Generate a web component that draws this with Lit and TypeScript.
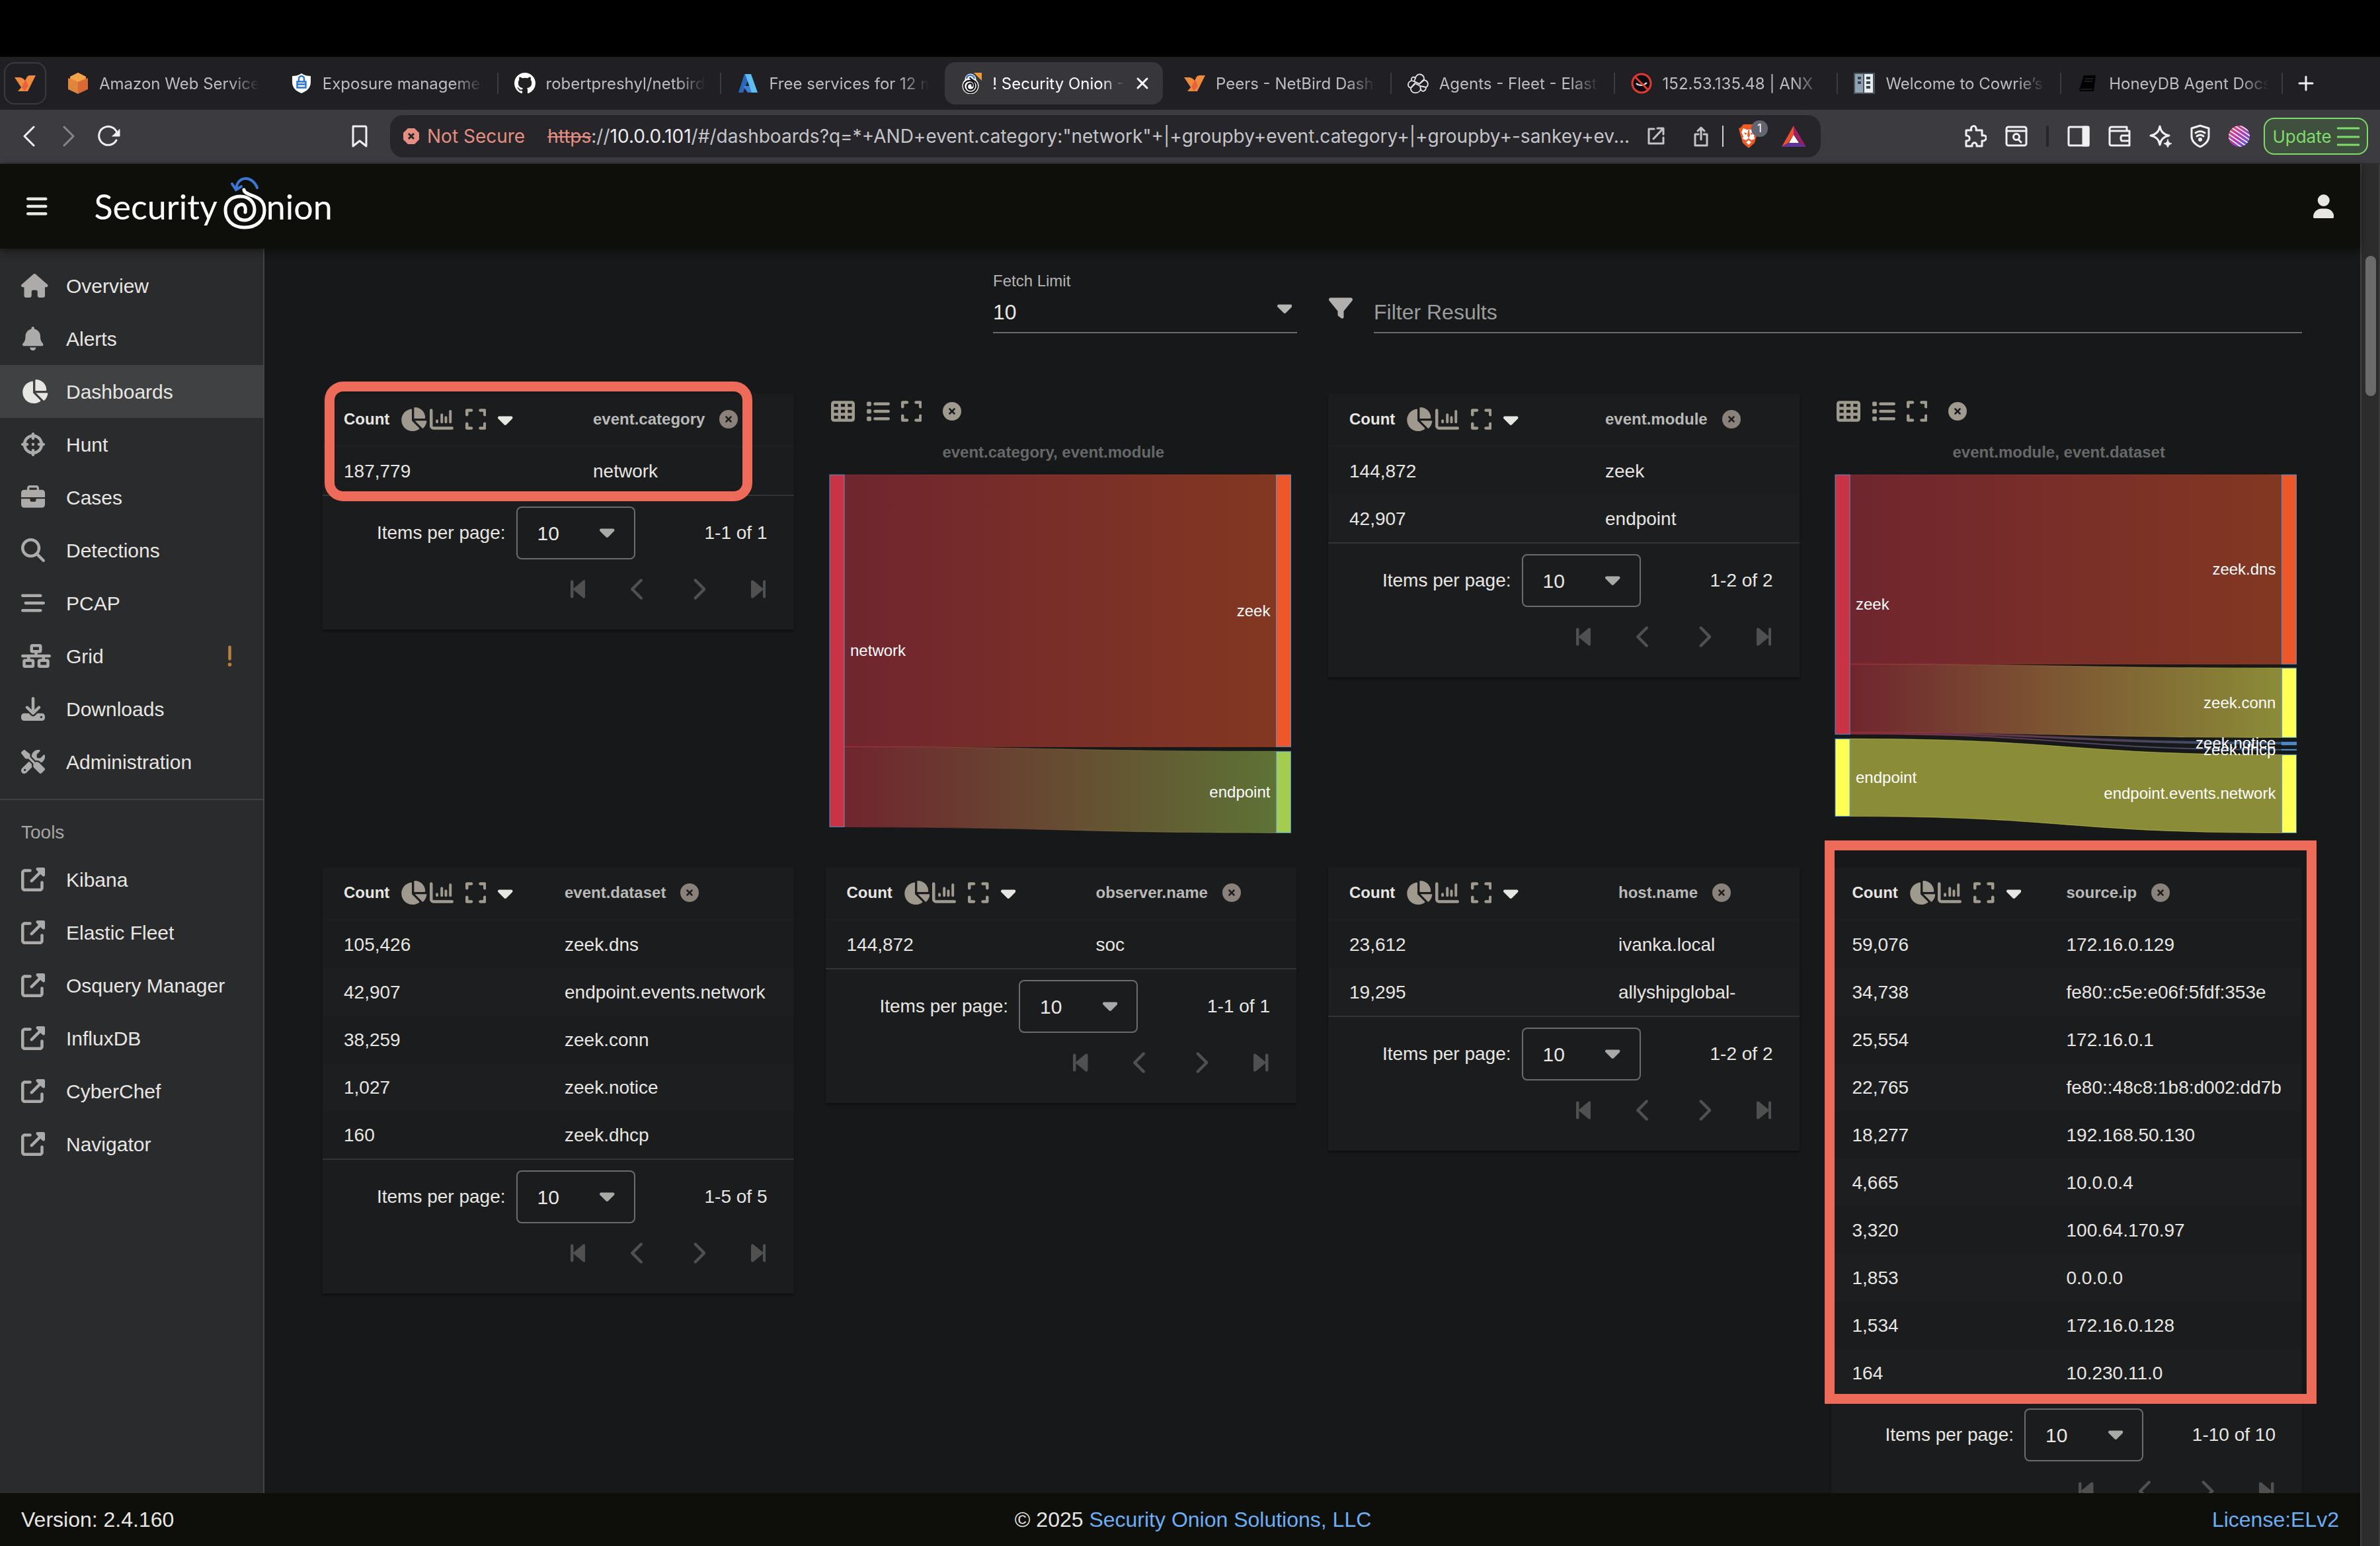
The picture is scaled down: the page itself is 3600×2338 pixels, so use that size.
import { LitElement, html, svg, css, nothing } from "lit";
import { customElement, property } from "lit/decorators.js";
import { classMap } from "lit/directives/class-map.js";

/* ---------- icons ---------- */

const ICONS: Record<string, [number, string]> = {
  house: [576, "M575.8 255.5c0 18-15 32.1-32 32.1h-32l.7 160.2c0 2.7-.2 5.4-.5 8.1V472c0 22.1-17.9 40-40 40H456c-1.1 0-2.2 0-3.3-.1c-1.4 .1-2.8 .1-4.2 .1H416 392c-22.1 0-40-17.9-40-40V448 384c0-17.7-14.3-32-32-32H256c-17.7 0-32 14.3-32 32v64 24c0 22.1-17.9 40-40 40H160 128.1c-1.5 0-3-.1-4.5-.2c-1.2 .1-2.4 .2-3.6 .2H104c-22.1 0-40-17.9-40-40V360c0-.9 0-1.9 .1-2.8V287.6H32c-18 0-32-14-32-32.1c0-9 3-17 10-24L266.4 8c7-7 15-8 22-8s15 2 21 7L564.8 231.5c8 7 12 15 11 24z"],
  bell: [448, "M224 0c-17.7 0-32 14.3-32 32V51.2C119 66 64 130.6 64 208v18.8c0 47-17.3 92.4-48.5 127.6l-7.4 8.3c-8.4 9.4-10.4 22.9-5.3 34.4S19.4 416 32 416H416c12.6 0 24-7.4 29.2-18.9s3.1-25-5.3-34.4l-7.4-8.3C401.3 319.2 384 273.9 384 226.8V208c0-77.4-55-142-128-156.8V32c0-17.7-14.3-32-32-32zm45.3 493.3c12-12 18.7-28.3 18.7-45.3H224 160c0 17 6.7 33.3 18.7 45.3s28.3 18.7 45.3 18.7s33.3-6.7 45.3-18.7z"],
  pie: [576, "M304 240V16.6c0-9 7-16.6 16-16.6C443.7 0 544 100.3 544 224c0 9-7.6 16-16.6 16H304zM32 272C32 150.7 122.1 50.3 239 34.3c9.2-1.3 17 6.1 17 15.4V288L412.5 444.5c6.7 6.7 6.2 17.7-1.5 23.1C371.8 495.6 323.8 512 272 512C139.5 512 32 404.6 32 272zm526.4 16c9.3 0 16.6 7.8 15.4 17c-7.7 55.9-34.6 105.6-73.9 142.3c-6 5.6-15.4 5.2-21.2-.7L320 288H558.4z"],
  crosshairs: [512, "M256 0c17.7 0 32 14.3 32 32V42.4c93.7 13.9 167.7 88 181.6 181.6H480c17.7 0 32 14.3 32 32s-14.3 32-32 32H469.6c-13.9 93.7-88 167.7-181.6 181.6V480c0 17.7-14.3 32-32 32s-32-14.3-32-32V469.6C130.3 455.7 56.3 381.7 42.4 288H32c-17.7 0-32-14.3-32-32s14.3-32 32-32H42.4C56.3 130.3 130.3 56.3 224 42.4V32c0-17.7 14.3-32 32-32zM107.4 288c12.5 58.3 58.4 104.1 116.6 116.6V384c0-17.7 14.3-32 32-32s32 14.3 32 32v20.6c58.3-12.5 104.1-58.4 116.6-116.6H384c-17.7 0-32-14.3-32-32s14.3-32 32-32h20.6C392.1 165.7 346.3 119.9 288 107.4V128c0 17.7-14.3 32-32 32s-32-14.3-32-32V107.4C165.7 119.9 119.9 165.7 107.4 224H128c17.7 0 32 14.3 32 32s-14.3 32-32 32H107.4zM256 224a32 32 0 1 1 0 64 32 32 0 1 1 0-64z"],
  briefcase: [512, "M184 48H328c4.4 0 8 3.6 8 8V96H176V56c0-4.4 3.6-8 8-8zm-56 8V96H64C28.7 96 0 124.7 0 160v96H192 320 512V160c0-35.3-28.7-64-64-64H384V56c0-30.9-25.1-56-56-56H184c-30.9 0-56 25.1-56 56zM512 288H320v32c0 17.7-14.3 32-32 32H224c-17.7 0-32-14.3-32-32V288H0V416c0 35.3 28.7 64 64 64H448c35.3 0 64-28.7 64-64V288z"],
  search: [512, "M416 208c0 45.9-14.9 88.3-40 122.7L502.6 457.4c12.5 12.5 12.5 32.8 0 45.3s-32.8 12.5-45.3 0L330.7 376c-34.4 25.2-76.8 40-122.7 40C93.1 416 0 322.9 0 208S93.1 0 208 0S416 93.1 416 208zM208 352a144 144 0 1 0 0-288 144 144 0 1 0 0 288z"],
  staggered: [512, "M0 96C0 78.3 14.3 64 32 64H416c17.7 0 32 14.3 32 32s-14.3 32-32 32H32C14.3 128 0 113.7 0 96zM64 256c0-17.7 14.3-32 32-32H480c17.7 0 32 14.3 32 32s-14.3 32-32 32H96c-17.7 0-32-14.3-32-32zM448 416c0 17.7-14.3 32-32 32H32c-17.7 0-32-14.3-32-32s14.3-32 32-32H416c17.7 0 32 14.3 32 32z"],
  network: [640, "M256 64H384v64H256V64zM240 0c-26.5 0-48 21.5-48 48v96c0 26.5 21.5 48 48 48h48v32H32c-17.7 0-32 14.3-32 32s14.3 32 32 32h96v32H80c-26.5 0-48 21.5-48 48v96c0 26.5 21.5 48 48 48H240c26.5 0 48-21.5 48-48V368c0-26.5-21.5-48-48-48H192V288H448v32H400c-26.5 0-48 21.5-48 48v96c0 26.5 21.5 48 48 48H560c26.5 0 48-21.5 48-48V368c0-26.5-21.5-48-48-48H512V288h96c17.7 0 32-14.3 32-32s-14.3-32-32-32H352V192h48c26.5 0 48-21.5 48-48V48c0-26.5-21.5-48-48-48H240zM96 448V384H224v64H96zm320-64H544v64H416V384z"],
  download: [512, "M288 32c0-17.7-14.3-32-32-32s-32 14.3-32 32V274.7l-73.4-73.4c-12.5-12.5-32.8-12.5-45.3 0s-12.5 32.8 0 45.3l128 128c12.5 12.5 32.8 12.5 45.3 0l128-128c12.5-12.5 12.5-32.8 0-45.3s-32.8-12.5-45.3 0L288 274.7V32zM64 352c-35.3 0-64 28.7-64 64v32c0 35.3 28.7 64 64 64H448c35.3 0 64-28.7 64-64V416c0-35.3-28.7-64-64-64H346.5l-45.3 45.3c-25 25-65.5 25-90.5 0L165.5 352H64zm368 56a24 24 0 1 1 0 48 24 24 0 1 1 0-48z"],
  tools: [512, "M78.6 5C69.1-2.4 55.6-1.5 47 7L7 47c-8.5 8.5-9.4 22-2.1 31.6l80 104c4.5 5.9 11.6 9.4 19 9.4h54.1l109 109c-14.7 29-10 65.4 14.3 89.6l112 112c12.5 12.5 32.8 12.5 45.3 0l64-64c12.5-12.5 12.5-32.8 0-45.3l-112-112c-24.2-24.2-60.6-29-89.6-14.3l-109-109V104c0-7.5-3.5-14.5-9.4-19L78.6 5zM19.9 396.1C7.2 408.8 0 426.1 0 444.1C0 481.6 30.4 512 67.9 512c18 0 35.3-7.2 48-19.9L233.7 374.3c-7.8-20.9-9-43.6-3.6-65.1l-61.7-61.7L19.9 396.1zM512 144c0-10.5-1.1-20.7-3.2-30.5c-2.4-11.2-16.1-14.1-24.2-6l-63.9 63.9c-3 3-7.1 4.7-11.3 4.7H352c-8.8 0-16-7.2-16-16V102.6c0-4.2 1.7-8.3 4.7-11.3l63.9-63.9c8.1-8.1 5.2-21.8-6-24.2C388.7 1.1 378.5 0 368 0C288.5 0 224 64.5 224 144l0 .8 85.3 85.3c36-9.1 75.8 .5 104 28.7L429 274.5c49-23 83-72.8 83-130.5zM56 432a24 24 0 1 1 48 0 24 24 0 1 1 -48 0z"],
  external: [512, "M352 0c-12.9 0-24.6 7.8-29.6 19.8s-2.2 25.7 6.9 34.9L370.7 96 201.4 265.4c-12.5 12.5-12.5 32.8 0 45.3s32.8 12.5 45.3 0L416 141.3l41.4 41.4c9.2 9.2 22.9 11.9 34.9 6.9s19.8-16.6 19.8-29.6V32c0-17.7-14.3-32-32-32H352zM80 32C35.8 32 0 67.8 0 112V432c0 44.2 35.8 80 80 80H400c44.2 0 80-35.8 80-80V320c0-17.7-14.3-32-32-32s-32 14.3-32 32V432c0 8.8-7.2 16-16 16H80c-8.8 0-16-7.2-16-16V112c0-8.8 7.2-16 16-16H192c17.7 0 32-14.3 32-32s-14.3-32-32-32H80z"],
  exclamation: [128, "M96 64c0-17.7-14.3-32-32-32S32 46.3 32 64V320c0 17.7 14.3 32 32 32s32-14.3 32-32V64zM64 480a40 40 0 1 0 0-80 40 40 0 1 0 0 80z"],
  expand: [448, "M32 32C14.3 32 0 46.3 0 64v96c0 17.7 14.3 32 32 32s32-14.3 32-32V96h64c17.7 0 32-14.3 32-32s-14.3-32-32-32H32zM64 352c0-17.7-14.3-32-32-32s-32 14.3-32 32v96c0 17.7 14.3 32 32 32h96c17.7 0 32-14.3 32-32s-14.3-32-32-32H64V352zM320 32c-17.7 0-32 14.3-32 32s14.3 32 32 32h64v64c0 17.7 14.3 32 32 32s32-14.3 32-32V64c0-17.7-14.3-32-32-32H320zM448 352c0-17.7-14.3-32-32-32s-32 14.3-32 32v64H320c-17.7 0-32 14.3-32 32s14.3 32 32 32h96c17.7 0 32-14.3 32-32V352z"],
  cells: [512, "M64 32C28.7 32 0 60.7 0 96V416c0 35.3 28.7 64 64 64H448c35.3 0 64-28.7 64-64V96c0-35.3-28.7-64-64-64H64zm88 64v64H64V96h88zm148 0v64H212V96h88zm148 0v64H360V96h88zM152 224v64H64V224h88zm148 0v64H212V224h88zm148 0v64H360V224h88zM152 352v64H64V352h88zm148 0v64H212V352h88zm148 0v64H360V352h88z"],
  list: [512, "M40 48C26.7 48 16 58.7 16 72v48c0 13.3 10.7 24 24 24H88c13.3 0 24-10.7 24-24V72c0-13.3-10.7-24-24-24H40zM192 64c-17.7 0-32 14.3-32 32s14.3 32 32 32H480c17.7 0 32-14.3 32-32s-14.3-32-32-32H192zm0 160c-17.7 0-32 14.3-32 32s14.3 32 32 32H480c17.7 0 32-14.3 32-32s-14.3-32-32-32H192zm0 160c-17.7 0-32 14.3-32 32s14.3 32 32 32H480c17.7 0 32-14.3 32-32s-14.3-32-32-32H192zM16 232v48c0 13.3 10.7 24 24 24H88c13.3 0 24-10.7 24-24V232c0-13.3-10.7-24-24-24H40c-13.3 0-24 10.7-24 24zM40 368c-13.3 0-24 10.7-24 24v48c0 13.3 10.7 24 24 24H88c13.3 0 24-10.7 24-24V392c0-13.3-10.7-24-24-24H40z"],
  close: [512, "M256 512A256 256 0 1 0 256 0a256 256 0 1 0 0 512zM175 175c9.4-9.4 24.6-9.4 33.9 0l47 47 47-47c9.4-9.4 24.6-9.4 33.9 0s9.4 24.6 0 33.9l-47 47 47 47c9.4 9.4 9.4 24.6 0 33.9s-24.6 9.4-33.9 0l-47-47-47 47c-9.4 9.4-24.6 9.4-33.9 0s-9.4-24.6 0-33.9l47-47-47-47c-9.4-9.4-9.4-24.6 0-33.9z"],
  caret: [320, "M137.4 374.6c12.5 12.5 32.8 12.5 45.3 0l128-128c9.2-9.2 11.9-22.9 6.9-34.9s-16.6-19.8-29.6-19.8L32 192c-12.9 0-24.6 7.8-29.6 19.8s-2.2 25.7 6.9 34.9l128 128z"],
  first: [320, "M267.5 440.6c9.5 7.9 22.8 9.7 34.1 4.4s18.4-16.6 18.4-29V96c0-12.4-7.2-23.7-18.4-29s-24.5-3.6-34.1 4.4l-192 160L64 241V96c0-17.7-14.3-32-32-32S0 78.3 0 96V416c0 17.7 14.3 32 32 32s32-14.3 32-32V271l11.5 9.6 192 160z"],
  prev: [320, "M9.4 233.4c-12.5 12.5-12.5 32.8 0 45.3l192 192c12.5 12.5 32.8 12.5 45.3 0s12.5-32.8 0-45.3L77.3 256 246.6 86.6c12.5-12.5 12.5-32.8 0-45.3s-32.8-12.5-45.3 0l-192 192z"],
  next: [320, "M310.6 233.4c12.5 12.5 12.5 32.8 0 45.3l-192 192c-12.5 12.5-32.8 12.5-45.3 0s-12.5-32.8 0-45.3L242.7 256 73.4 86.6c-12.5-12.5-12.5-32.8 0-45.3s32.8-12.5 45.3 0l192 192z"],
  last: [320, "M52.5 440.6c-9.5 7.9-22.8 9.7-34.1 4.4S0 428.4 0 416V96C0 83.6 7.2 72.3 18.4 67s24.5-3.6 34.1 4.4l192 160L256 241V96c0-17.7 14.3-32 32-32s32 14.3 32 32V416c0 17.7-14.3 32-32 32s-32-14.3-32-32V271l-11.5 9.6-192 160z"],
  filter: [512, "M3.9 54.9C10.5 40.9 24.5 32 40 32H472c15.5 0 29.5 8.9 36.1 22.9s4.6 30.5-5.2 42.5L320 320.9V448c0 12.1-6.8 23.2-17.7 28.6s-23.8 4.3-33.5-3l-64-48c-8.1-6-12.8-15.5-12.8-25.6V320.9L9 97.3C-.7 85.4-2.8 68.8 3.9 54.9z"],
  bars: [448, "M0 96C0 78.3 14.3 64 32 64H416c17.7 0 32 14.3 32 32s-14.3 32-32 32H32C14.3 128 0 113.7 0 96zM0 256c0-17.7 14.3-32 32-32H416c17.7 0 32 14.3 32 32s-14.3 32-32 32H32c-17.7 0-32-14.3-32-32zM448 416c0 17.7-14.3 32-32 32H32c-17.7 0-32-14.3-32-32s14.3-32 32-32H416c17.7 0 32 14.3 32 32z"],
  user: [448, "M224 256A128 128 0 1 0 224 0a128 128 0 1 0 0 256zm-45.7 48C79.8 304 0 383.8 0 482.3C0 498.7 13.3 512 29.7 512H418.3c16.4 0 29.7-13.3 29.7-29.7C448 383.8 368.2 304 269.7 304H178.3z"],
};

const icon = (name: string, size = 36) => {
  const [w, d] = ICONS[name];
  return html`<svg class="ico" aria-hidden="true" viewBox="0 0 ${w} 512" width=${(w * size) / 512} height=${size}><path fill="currentColor" d=${d} /></svg>`;
};

const chartIcon = html`<svg class="ico" aria-hidden="true" viewBox="0 0 512 512" width="36" height="36" fill="none" stroke="currentColor" stroke-linecap="round">
  <path stroke-width="64" d="M32 64V400a48 48 0 0 0 48 48H480" />
  <path stroke-width="56" d="M157 288V316M259 160V316M348 216V316M444 84V316" />
</svg>`;

const netbird = html`<svg viewBox="0 0 32 32" width="32" height="32" aria-hidden="true">
  <path fill="#ee8b3e" d="M0 7h7c4 0 7 2 9 5l5 8-7 8z" />
  <path fill="#ee8b3e" d="M32 4h-8c-3 0-5 1-6 4l-6 12-7 8h15z" />
  <path fill="#e9613c" d="M17 10 11 21l4 7 6-8-4-9z" />
</svg>`;

const FAVICONS: Record<string, unknown> = {
  aws: html`<svg viewBox="0 0 32 32" width="32" height="32" aria-hidden="true">
    <path fill="#ef9a40" d="M16 0 28 6v10l-12 7L4 16V6z" />
    <path fill="#e0853c" d="M1 8 16 14v18L1 25z" />
    <path fill="#d96a35" d="M31 8 16 14v18l15-7z" />
    <path fill="#f2a648" d="M16 0 28 6 16 14 4 6z" />
  </svg>`,
  shield: html`<svg viewBox="0 0 32 32" width="32" height="32" aria-hidden="true">
    <path fill="#fff" d="M16 1c5 3 9 4 14 4v9c0 9-6 14-14 17C8 28 2 23 2 14V5c5 0 9-1 14-4z" />
    <path fill="none" stroke="#2a74cf" stroke-width="2.4" d="M9.500 13.500h13v9h-13zM12 13V9a4 4 0 0 1 8 0v4M9 17.500h14" />
  </svg>`,
  github: html`<svg viewBox="0 0 16 16" width="32" height="32" aria-hidden="true"><path fill="#fff" d="M8 0C3.580 0 0 3.580 0 8c0 3.540 2.290 6.530 5.470 7.590.4.070.55-.17.55-.38 0-.19-.01-.82-.01-1.490-2.010.37-2.530-.49-2.690-.94-.09-.23-.48-.94-.82-1.130-.28-.15-.68-.52-.01-.53.63-.01 1.080.58 1.230.82.72 1.210 1.870.87 2.330.66.07-.52.28-.87.51-1.070-1.780-.2-3.640-.89-3.640-3.950 0-.87.31-1.590.82-2.150-.08-.2-.36-1.020.08-2.120 0 0 .67-.21 2.200.82.64-.18 1.320-.27 2-.27s1.360.09 2 .27c1.530-1.040 2.200-.82 2.200-.82.44 1.100.16 1.920.08 2.120.51.56.82 1.270.82 2.150 0 3.070-1.870 3.750-3.650 3.950.29.25.54.73.54 1.480 0 1.070-.01 1.930-.01 2.200 0 .21.15.46.55.38A8 8 0 0 0 16 8c0-4.420-3.580-8-8-8z" /></svg>`,
  azure: html`<svg viewBox="0 0 32 32" width="32" height="32" aria-hidden="true">
    <path fill="#2a67b8" d="M11 2h9L9 30H2z" />
    <path fill="#3f7fd6" d="M9 20h14l5 10H16z" />
    <path fill="#5fbdf0" d="M12 2h9l10 28h-9z" />
  </svg>`,
  onion: html`<svg viewBox="0 0 32 32" width="32" height="32" aria-hidden="true">
    <path fill="#f09a35" d="M20 0h12v12z" />
    <circle cx="15" cy="20" r="12.500" fill="#fff" />
    <circle cx="15" cy="10" r="8.500" fill="#fff" />
    <path fill="none" stroke="#3b7bd6" stroke-width="2.600" d="M9 9c1-7 10-7 12 0" />
    <path fill="none" stroke="#17171a" stroke-width="2.400" d="M14 7c1 5 11 4 11 13a10 10 0 0 1-20 0c0-5 4-8 9-8s7 4 7 8-3 6-6 6-5-2-5-5 2-5 5-5 3 3 2 5" />
  </svg>`,
  netbird,
  elastic: html`<svg viewBox="0 0 32 32" width="32" height="32" fill="none" stroke="#e6e6e8" stroke-width="1.800" aria-hidden="true">
    <path fill="#202024" d="M12 8a6.500 6.500 0 1 1 13 2l-7 7-8-4z" />
    <path d="M12 8c-3-3-7-1-6 4M25 11c6 1 8 8 3 11M6 12c-6 2-7 9-1 11M5 23c-1 9 12 10 15 2l-1-5-8-4z" />
    <path d="M10 13l8 4 7-6M11 17l-6 6M19 20l9 2M20 25c2 5 8 3 8-3M10 13l-4-1" />
  </svg>`,
  banned: html`<svg viewBox="0 0 32 32" width="32" height="32" aria-hidden="true">
    <circle cx="16" cy="16" r="14" fill="#0b0b0d" stroke="#e23a2e" stroke-width="3" />
    <path fill="none" stroke="#ddd" stroke-width="2.400" d="M8 16c4 4 11 4 16-1" />
    <path stroke="#e23a2e" stroke-width="3" d="M6 6l20 20" />
  </svg>`,
  cowrie: html`<svg viewBox="0 0 32 32" width="32" height="32" aria-hidden="true">
    <path fill="#4b565f" d="M0 0h32v32H0z" /><path fill="#8fa3b5" d="M2 2h12v28H2z" /><path fill="#e8edf0" d="M16 2h13v28H16z" />
    <path fill="#39444d" d="M6 6h5v4H6zM6 13h5v4H6zM19 6h6v4h-6zM19 13h6v4h-6zM19 20h6v4h-6z" />
  </svg>`,
  book: html`<svg viewBox="0 0 32 32" width="32" height="32" aria-hidden="true">
    <path fill="#000" d="M10 4h18l-3 24H5c-2 0-2-3-1-5z" /><path fill="none" stroke="#26262c" stroke-width="1.600" d="M12 9h12M11 13h12M5 25h18" />
  </svg>`,
};

const line = (body: unknown, w: number, h: number, sw = 3) => html`<svg viewBox="0 0 ${w} ${h}" width=${w} height=${h} fill="none" stroke="currentColor" stroke-width=${sw} stroke-linecap="round" stroke-linejoin="round" aria-hidden="true">${body}</svg>`;

/* ---------- data ---------- */

interface Group { field: string; split: number; rows: [string, string][]; ring?: string; }
interface Node_ { side: "l" | "r"; y0: number; y1: number; color: string; label: string; }
interface Link_ { a: [number, number]; b: [number, number]; from: string; to: string; }
interface Flow { title: string; nodes: Node_[]; links: Link_[]; }

const RED = "#c93343", ORANGE = "#ee5729", GREEN = "#a4cc50", YELLOW = "#ffff55", BLUE = "#4c88c4";

const G: Record<string, Group> = {
  category: { field: "event.category", split: 393, rows: [["187,779", "network"]], ring: "round" },
  module: { field: "event.module", split: 403, rows: [["144,872", "zeek"], ["42,907", "endpoint"]] },
  dataset: { field: "event.dataset", split: 350, rows: [["105,426", "zeek.dns"], ["42,907", "endpoint.events.network"], ["38,259", "zeek.conn"], ["1,027", "zeek.notice"], ["160", "zeek.dhcp"]] },
  observer: { field: "observer.name", split: 393, rows: [["144,872", "soc"]] },
  host: { field: "host.name", split: 423, rows: [["23,612", "ivanka.local"], ["19,295", "allyshipglobal-"]] },
  source: {
    field: "source.ip", split: 340, ring: "square",
    rows: [["59,076", "172.16.0.129"], ["34,738", "fe80::c5e:e06f:5fdf:353e"], ["25,554", "172.16.0.1"], ["22,765", "fe80::48c8:1b8:d002:dd7b"], ["18,277", "192.168.50.130"], ["4,665", "10.0.0.4"], ["3,320", "100.64.170.97"], ["1,853", "0.0.0.0"], ["1,534", "172.16.0.128"], ["164", "10.230.11.0"]],
  },
};

const F1: Flow = {
  title: "event.category, event.module",
  nodes: [
    { side: "l", y0: 70, y1: 602, color: RED, label: "network" },
    { side: "r", y0: 70, y1: 481, color: ORANGE, label: "zeek" },
    { side: "r", y0: 488, y1: 611, color: GREEN, label: "endpoint" },
  ],
  links: [
    { a: [70, 481], b: [70, 481], from: RED, to: ORANGE },
    { a: [481, 602], b: [488, 611], from: RED, to: GREEN },
  ],
};

const F2: Flow = {
  title: "event.module, event.dataset",
  nodes: [
    { side: "l", y0: 70, y1: 462, color: RED, label: "zeek" },
    { side: "l", y0: 469, y1: 586, color: YELLOW, label: "endpoint" },
    { side: "r", y0: 70, y1: 356, color: ORANGE, label: "zeek.dns" },
    { side: "r", y0: 362, y1: 467, color: YELLOW, label: "zeek.conn" },
    { side: "r", y0: 474, y1: 478, color: BLUE, label: "zeek.notice" },
    { side: "r", y0: 485, y1: 486, color: BLUE, label: "zeek.dhcp" },
    { side: "r", y0: 493, y1: 611, color: YELLOW, label: "endpoint.events.network" },
  ],
  links: [
    { a: [70, 356], b: [70, 356], from: RED, to: ORANGE },
    { a: [356, 459], b: [362, 467], from: RED, to: YELLOW },
    { a: [459, 461], b: [474, 477], from: RED, to: BLUE },
    { a: [461, 462], b: [485, 486], from: RED, to: BLUE },
    { a: [469, 586], b: [493, 611], from: YELLOW, to: YELLOW },
  ],
};

const NAV: [string, string][] = [["house", "Overview"], ["bell", "Alerts"], ["pie", "Dashboards"], ["crosshairs", "Hunt"], ["briefcase", "Cases"], ["search", "Detections"], ["staggered", "PCAP"], ["network", "Grid"], ["download", "Downloads"], ["tools", "Administration"]];
const TOOLS = ["Kibana", "Elastic Fleet", "Osquery Manager", "InfluxDB", "CyberChef", "Navigator"];

const TABS: { ico: string; title: string; sep?: boolean; active?: boolean }[] = [
  { ico: "aws", title: "Amazon Web Services" },
  { ico: "shield", title: "Exposure management" },
  { ico: "github", title: "robertpreshyl/netbird", sep: true },
  { ico: "azure", title: "Free services for 12 months", sep: true },
  { ico: "onion", title: "! Security Onion - Dash", active: true },
  { ico: "netbird", title: "Peers - NetBird Dashboard" },
  { ico: "elastic", title: "Agents - Fleet - Elastic", sep: true },
  { ico: "banned", title: "152.53.135.48 | ANX", sep: true },
  { ico: "cowrie", title: "Welcome to Cowrie’s docs", sep: true },
  { ico: "book", title: "HoneyDB Agent Docs", sep: true },
];

const base = css`
  * { box-sizing: border-box; }
  svg { display: block; flex: none; }
  button { appearance: none; background: none; border: 0; padding: 0; margin: 0; color: inherit; font: inherit; display: flex; align-items: center; justify-content: center; flex: none; }
  select, input { appearance: none; background: none; border: 0; border-radius: 0; margin: 0; padding: 0; color: inherit; font: inherit; outline: none; }
  a { color: inherit; text-decoration: none; }
`;

/* ---------- grouped count table ---------- */

@customElement("group-table")
export class GroupTable extends LitElement {
  @property({ attribute: false }) group!: Group;

  static styles = [base, css`
    :host { display: block; }
    .card { position: relative; background: #1b1c1e; box-shadow: 0 3px 3px rgba(0, 0, 0, 0.35); }
    table { width: 100%; table-layout: fixed; border-collapse: separate; border-spacing: 0; }
    th, td { text-align: left; padding: 0 0 0 32px; white-space: nowrap; overflow: visible; }
    th + th, td + td { padding-left: 16px; }
    th { height: 80px; padding-bottom: 2px; font-size: 24px; font-weight: 700; border-bottom: 2px solid #1f2022; }
    td { height: 72px; padding-top: 1px; font-size: 28px; }
    tr:nth-child(even) td { background: #1d1e20; }
    .head { display: flex; align-items: center; gap: 18px; }
    .pair { display: flex; gap: 4px; color: #a09a8e; }
    .soft { color: #a09a8e; }
    .count { display: flex; align-items: center; gap: 16px; }
    .name { color: #b9b9b7; }
    .col2 { display: flex; align-items: center; gap: 22px; }
    .rm { color: #8a827a; }
    .foot { border-top: 2px solid #333436; padding: 16px 0; font-size: 28px; }
    .size { display: flex; align-items: center; justify-content: flex-end; gap: 16px; padding-right: 40px; }
    .pick { position: relative; display: flex; }
    .pick select { width: 180px; height: 80px; border: 2px solid #6a6b6c; border-radius: 8px; padding: 0 30px; font-size: 30px; }
    .pick svg { position: absolute; right: 31px; top: 20px; color: #a9a9a7; pointer-events: none; }
    .info { min-width: 184px; text-align: right; }
    .pages { display: flex; justify-content: flex-end; padding-right: 8px; height: 90px; color: #4f504f; }
    .pages button { width: 91px; height: 90px; }
    .ring { position: absolute; border: 15px solid #ed6b58; pointer-events: none; z-index: 2; }
    .round { inset: -19px 63px 194px 3px; border-radius: 28px; }
    .square { inset: -41px -22px 193px -10px; }
  `];

  render() {
    const { field, split, rows, ring } = this.group;
    const n = rows.length;
    return html`<section class="card">
      <table>
        <colgroup><col style="width:${split}px" /><col /></colgroup>
        <thead><tr>
          <th scope="col"><div class="head">
            <span class="count">Count <span class="pair"><button aria-label="Pie chart">${icon("pie")}</button><button aria-label="Bar chart">${chartIcon}</button></span></span>
            <button class="soft" aria-label="Maximize">${icon("expand")}</button>
            <button aria-label="Sort">${icon("caret")}</button>
          </div></th>
          <th scope="col"><div class="col2"><span class="name">${field}</span><button class="rm" aria-label="Remove ${field}">${icon("close", 28)}</button></div></th>
        </tr></thead>
        <tbody>${rows.map(([c, v]) => html`<tr><td>${c}</td><td>${v}</td></tr>`)}</tbody>
      </table>
      <div class="foot">
        <div class="size">
          <label for="size">Items per page:</label>
          <span class="pick"><select id="size"><option>10</option><option>25</option><option>50</option></select>${icon("caret")}</span>
          <span class="info">1-${n} of ${n}</span>
        </div>
        <div class="pages">
          <button aria-label="First page">${icon("first")}</button>
          <button aria-label="Previous page">${icon("prev")}</button>
          <button aria-label="Next page">${icon("next")}</button>
          <button aria-label="Last page">${icon("last")}</button>
        </div>
      </div>
      ${ring ? html`<div class="ring ${ring}"></div>` : nothing}
    </section>`;
  }
}

/* ---------- sankey ---------- */

@customElement("sankey-chart")
export class SankeyChart extends LitElement {
  @property({ attribute: false }) flow!: Flow;

  static styles = [base, css`
    :host { display: block; }
    .bar { display: flex; align-items: center; height: 52px; padding-left: 8px; color: #a09a8e; gap: 17px; }
    .bar .rm { margin-left: 15px; }
    .plot { width: 100%; height: auto; }
    .title { font-size: 24px; font-weight: 700; fill: #676868; }
    .label { font-size: 24px; fill: #fff; }
  `];

  private ribbon(l: Link_) {
    const x0 = 28, x1 = 681, m = (x0 + x1) / 2;
    return `M${x0} ${l.a[0]}C${m} ${l.a[0]} ${m} ${l.b[0]} ${x1} ${l.b[0]}V${l.b[1]}C${m} ${l.b[1]} ${m} ${l.a[1]} ${x0} ${l.a[1]}Z`;
  }

  render() {
    const { title, nodes, links } = this.flow;
    return html`
      <div class="bar">
        <button aria-label="Table">${icon("cells")}</button>
        <button aria-label="Legend">${icon("list")}</button>
        <button aria-label="Maximize">${icon("expand")}</button>
        <button class="rm" aria-label="Remove">${icon("close", 28)}</button>
      </div>
      <svg class="plot" viewBox="0 0 712 616" role="img" aria-label=${title}>
        <defs>${links.map((l, i) => svg`<linearGradient id="g${i}" gradientUnits="userSpaceOnUse" x1="28" x2="681" y1="0" y2="0"><stop stop-color=${l.from} /><stop offset="1" stop-color=${l.to} /></linearGradient>`)}</defs>
        <text class="title" x="344" y="44" text-anchor="middle">${title}</text>
        ${links.map((l, i) => svg`<path d=${this.ribbon(l)} fill="url(#g${i})" stroke="url(#g${i})" fill-opacity=".5" stroke-opacity=".4" />`)}
        ${nodes.map((n) => svg`<rect x=${n.side === "l" ? 6 : 681} y=${n.y0} width="22" height=${n.y1 - n.y0} fill=${n.color} stroke="#4f93d2" />`)}
        ${nodes.map((n) => svg`<text class="label" x=${n.side === "l" ? 37 : 672} y=${(n.y0 + n.y1) / 2 + 8} text-anchor=${n.side === "l" ? "start" : "end"}>${n.label}</text>`)}
      </svg>`;
  }
}

/* ---------- page ---------- */

@customElement("app-root")
export class AppRoot extends LitElement {
  static styles = [base, css`
    :host { display: flex; flex-direction: column; height: 100vh; background: #16181a; color: #e8e6e2; font-family: "Liberation Sans", Arial, sans-serif; font-size: 30px; overflow: hidden; }
    .notch { flex: none; height: 86px; background: #000; }

    .tabs { flex: none; display: flex; align-items: center; height: 80px; background: #202024; font-family: Inter, sans-serif; font-size: 24px; color: #bdbdbf; padding: 0 146px 0 6px; position: relative; }
    .pinned { width: 64px; height: 64px; border: 2px solid #3a3a40; border-radius: 16px; margin-right: 6px; }
    .tab { flex: 1 1 0; min-width: 0; display: flex; align-items: center; }
    .sep { flex: none; width: 2px; height: 32px; background: transparent; }
    .sep.on { background: #3b3b41; }
    .tab .body { flex: 1; min-width: 0; height: 64px; display: flex; align-items: center; justify-content: flex-start; gap: 16px; padding: 0 22px 0 24px; border-radius: 16px; }
    .tab .ttl { flex: 1; min-width: 0; overflow: hidden; white-space: nowrap; text-align: left; mask-image: linear-gradient(90deg, #000 82%, transparent); }
    .tab.active .body { background: #37373b; margin: 0 6px 0 0; color: #fff; padding-right: 20px; }
    .plus { position: absolute; right: 96px; top: 24px; width: 32px; height: 32px; color: #f0f0f2; }
    .endsep { position: absolute; right: 147px; top: 24px; }

    .toolbar { flex: none; display: flex; align-items: center; height: 82px; background: #3c3c40; border-bottom: 2px solid #2f2f35; font-family: Inter, sans-serif; font-size: 28px; color: #f0f0f2; padding: 0 18px 0 28px; }
    .back { width: 32px; margin-right: 28px; }
    .fwd { width: 32px; color: #85858a; margin-right: 26px; }
    .mark { margin-left: 349px; margin-right: 33px; }
    .address { flex: 1; min-width: 0; height: 64px; border-radius: 20px; background: #25252a; display: flex; align-items: center; padding: 0 22px 0 20px; margin-right: 217px; color: #c4c4c8; }
    .warn { color: #e58f83; display: flex; align-items: center; gap: 12px; margin-right: 34px; white-space: nowrap; }
    .scheme { color: #e58f83; text-decoration: line-through; text-decoration-thickness: 2px; }
    .host { color: #ececef; }
    .url { flex: 1; min-width: 0; text-overflow: ellipsis; margin-right: 12px; }
    .address .share { margin-left: 43px; margin-right: 20px; }
    .vline { width: 2px; height: 32px; background: #d0d0d4; margin-right: 22px; }
    .lion { position: relative; margin-right: 34px; }
    .badge { position: absolute; left: 20px; top: -6px; width: 25px; height: 25px; border-radius: 12px; background: #636470; color: #fff; font-size: 17px; line-height: 25px; text-align: center; }
    .exts { display: flex; align-items: center; gap: 28px; margin-right: 21px; }
    .exts .bar { width: 4px; height: 32px; border-radius: 2px; background: #26262a; }
    .update { height: 56px; width: 158px; gap: 8px; border: 2px solid #7fdc6a; border-radius: 16px; background: #40503f; color: #7fdc6a; font-size: 26px; }

    .app { flex: 1; min-height: 0; display: flex; }
    .view { flex: 1; min-width: 0; display: flex; flex-direction: column; }
    .scroll { flex: none; width: 30px; background: #2c2c2c; border-left: 2px solid #404042; border-right: 2px solid #3a3a3a; padding: 139px 4px 0 6px; }
    .thumb { height: 212px; border-radius: 8px; background: #6b6b6b; }
    .top { flex: none; height: 128px; background: #0e0f0b; display: flex; align-items: center; padding: 0 40px; box-shadow: 0 4px 12px rgba(0, 0, 0, 0.45); z-index: 3; }
    .logo { display: flex; align-items: center; margin-left: 71px; margin-right: auto; font-family: Lato, sans-serif; font-size: 52px; color: #fff; height: 128px; }
    .logo svg { margin: 0 0 10px 8px; }

    .body-row { flex: 1; min-height: 0; display: flex; }
    .side { flex: none; width: 400px; background: #2a2b2d; border-right: 2px solid #444547; padding-top: 16px; overflow: hidden; }
    .item { display: flex; align-items: center; height: 80px; padding: 0 46px 0 32px; }
    .item .slot { width: 36px; display: flex; justify-content: center; color: #acaba9; margin-right: 32px; }
    .item .slot.wide { justify-content: flex-start; }
    .item .txt { flex: 1; padding-top: 2px; }
    .item.on { background: #404142; }
    .item.on .slot { color: #e8e6e2; }
    .alert { color: #b9803a; }
    .side hr { border: 0; border-top: 2px solid #404143; margin: 16px 0 0; }
    .sub { color: #a6a6a5; font-size: 28px; padding: 32px 32px 14px; line-height: 34px; }

    .main { flex: 1; min-width: 0; overflow: hidden; padding: 34px 88px 0; }
    .filters { display: grid; grid-template-columns: 1014fr 460fr 1520fr; margin-bottom: 92px; font-size: 32px; }
    .fetch { grid-column: 2; position: relative; }
    .fetch label { display: block; font-size: 24px; line-height: 30px; color: #b5b5b3; }
    .fetch select { width: 100%; height: 64px; padding-top: 2px; border-bottom: 2px solid #6a6b6c; }
    .fetch svg { position: absolute; right: 8px; bottom: 21px; color: #b5b5b3; }
    .find { display: flex; align-items: center; gap: 32px; padding: 30px 0 0 48px; }
    .find svg { color: #b0afad; margin-bottom: 12px; }
    .find input { flex: 1; min-width: 0; height: 64px; padding-top: 2px; border-bottom: 2px solid #6a6b6c; }
    .find input::placeholder { color: #9c9d9c; opacity: 1; }
    .grid { display: grid; grid-template-columns: repeat(4, minmax(0, 1fr)); gap: 48px; align-items: start; }

    .bottom { flex: none; height: 80px; background: #0e0f0b; display: flex; align-items: center; justify-content: space-between; padding: 0 32px; font-size: 32px; z-index: 3; }
    .bottom a { color: #6aaef5; }
  `];

  private tabBar() {
    return html`<nav class="tabs" aria-label="Tabs">
      <button class="pinned" aria-label="NetBird">${netbird}</button>
      ${TABS.map((t) => html`<div class=${classMap({ tab: true, active: !!t.active })}>
        <span class=${classMap({ sep: true, on: !!t.sep })}></span>
        <button class="body">${FAVICONS[t.ico]}<span class="ttl">${t.title}</span>${t.active ? line(svg`<path d="M4 4l14 14M18 4 4 18" />`, 22, 22) : nothing}</button>
      </div>`)}
      <span class="sep on endsep"></span>
      <button class="plus" aria-label="New tab">${line(svg`<path d="M12 2v20M2 12h20" />`, 24, 24)}</button>
    </nav>`;
  }

  private toolBar() {
    return html`<div class="toolbar">
      <button class="back" aria-label="Back">${line(svg`<path d="M17 2 3 16l14 14" />`, 20, 32)}</button>
      <button class="fwd" aria-label="Forward">${line(svg`<path d="M3 2l14 14L3 30" />`, 20, 32)}</button>
      <button aria-label="Reload">${line(svg`<path d="M30 23a14 14 0 1 1 1-11" /><path fill="currentColor" stroke-width="1" d="M35 7v10H24z" />`, 36, 34)}</button>
      <button class="mark" aria-label="Bookmark">${line(svg`<path d="M3 2h18q2 0 2 2v28l-10-8-10 8V4q0-2 2-2z" />`, 26, 34)}</button>
      <div class="address">
        <span class="warn"><svg viewBox="0 0 24 24" width="24" height="24" aria-hidden="true"><path fill="currentColor" d="M7 0h10l7 7v10l-7 7H7l-7-7V7z" /><path stroke="#25252a" stroke-width="3" d="M8 8l8 8M16 8l-8 8" /></svg>Not Secure</span>
        <span class="scheme">https</span><span>://</span><span class="host">10.0.0.101</span>
        <input class="url" aria-label="Address" value='/#/dashboards?q=*+AND+event.category:"network"+|+groupby+event.category+|+groupby+-sankey+ev...' />
        <button aria-label="Open">${line(svg`<path d="M11 3H3v22h22v-9M16 2h9v9M25 2 10 18" />`, 27, 28)}</button>
        <button class="share" aria-label="Share">${line(svg`<path d="M8 12H3v17h18V12h-5M12 20V2M7 7l5-5 5 5" />`, 24, 31)}</button>
        <span class="vline"></span>
        <button class="lion" aria-label="Shields"><svg viewBox="0 0 32 36" width="32" height="36" aria-hidden="true">
          <path fill="#ee5a24" d="M8 0h16l4 5 3 1-2 8-4 14-9 8-9-8L3 14 1 6l3-1z" />
          <path fill="#fff" d="M8 6l5 2h6l5-2 3 6-3 6 1 4-5 2-4-3-4 3-5-2 1-4-3-6zM16 24l4 3-4 4-4-4z" />
          <path fill="#ee5a24" d="M9 12l5 2-3 2zM23 12l-5 2 3 2zM15 9h2l1 8-2 4-2-4z" />
        </svg><span class="badge">1</span></button>
        <button aria-label="Rewards"><svg viewBox="0 0 37 32" width="37" height="32" aria-hidden="true"><path fill="#ef4f2c" d="M18 0v14L10 26 0 32z" /><path fill="#9c1f63" d="M18 0v14l9 12 10 6z" /><path fill="#5f3596" d="M0 32h37l-10-6H10z" /><path fill="#fff" d="M18 14l8 12H11z" /></svg></button>
      </div>
      <div class="exts">
        <button aria-label="Extensions">${line(svg`<path d="M3 9h8c-3-8 9-9 7 0h9v8c9-2 8 9 0 8v8h-8c1-7-8-7-7 0H3v-8c7 1 7-8 0-8z" />`, 34, 36)}</button>
        <button aria-label="Search page">${line(svg`<rect x="2" y="2" width="30" height="28" rx="3" /><path d="M2 8h30" /><circle cx="17" cy="17" r="4.500" /><path d="M20 21l4 4" />`, 34, 32)}</button>
        <span class="bar"></span>
        <button aria-label="Sidebar">${line(svg`<rect x="2" y="2" width="30" height="28" rx="2" /><path fill="currentColor" d="M24 2h8v28h-8z" />`, 34, 32)}</button>
        <button aria-label="Wallet">${line(svg`<path d="M28 7V2H5Q2 2 2 5v22q0 3 3 3h27V8H4M32 15H21q-2 0-2 4t2 4h11" />`, 34, 32)}</button>
        <button aria-label="Assistant">${line(svg`<path d="M16 2q2 12 14 14-12 2-14 14Q14 18 2 16 14 14 16 2z" /><path fill="currentColor" stroke-width="1" d="M28 22q1 6 6 6-5 1-6 6-1-5-6-6 5 0 6-6z" />`, 34, 34)}</button>
        <button aria-label="VPN">${line(svg`<path d="M15 2l13 4v12q0 10-13 16Q2 28 2 18V6z" /><path d="M8 13q7-5 14 0M10 18q5-4 10 0" /><circle cx="15" cy="23" r="1.500" fill="currentColor" />`, 30, 36)}</button>
        <button aria-label="Profile"><svg viewBox="0 0 32 32" width="32" height="32" aria-hidden="true"><defs><linearGradient id="ball" x1="0" y1="0" x2="1" y2="1"><stop offset=".1" stop-color="#e0507a" /><stop offset=".5" stop-color="#b338b4" /><stop offset=".9" stop-color="#5a5fd8" /></linearGradient><clipPath id="bc"><circle cx="16" cy="16" r="16" /></clipPath></defs><g clip-path="url(#bc)"><path fill="url(#ball)" d="M0 0h32v32H0z" /><path stroke="#fff" stroke-width="1.600" d="M12-4l24 16M6-2l30 20M0 0l34 23M-2 5l34 23M-4 10l34 23M-4 16l24 17" /></g></svg></button>
      </div>
      <button class="update">Update ${line(svg`<path d="M1 3h32M1 16h32M1 28h32" />`, 34, 31)}</button>
    </div>`;
  }

  render() {
    return html`
      <div class="notch"></div>
      ${this.tabBar()}
      ${this.toolBar()}
      <div class="app">
        <div class="view">
          <header class="top">
            <button aria-label="Menu">${icon("bars")}</button>
            <div class="logo">Security<svg viewBox="0 0 66 84" width="66" height="84" fill="none" stroke-linecap="round" aria-hidden="true">
              <path stroke="#fff" stroke-width="5" d="M32 22C33 33 63 27 63 53 63 69 50 79 33 79 14 79 4 67 4 53 4 39 14 32 27 32 40 32 48 41 48 52 48 62 41 68 33 68 24 68 19 62 19 55 19 48 24 45 28 44 34 44 35 50 34 56" />
              <path stroke="#3b78d4" stroke-width="4" d="M52 19C45 0 22 0 20 21M14 13l6 9 8-5" />
            </svg>nion</div>
            <button aria-label="Account">${icon("user")}</button>
          </header>
          <div class="body-row">
            <nav class="side" aria-label="Main">
              ${NAV.map(([ic, label]) => html`<a class=${classMap({ item: true, on: label === "Dashboards" })} href="#/${label.toLowerCase()}">
                <span class=${classMap({ slot: true, wide: ICONS[ic][0] > 512 })}>${icon(ic)}</span><span class="txt">${label}</span>
                ${label === "Grid" ? html`<span class="alert">${icon("exclamation")}</span>` : nothing}
              </a>`)}
              <hr />
              <div class="sub">Tools</div>
              ${TOOLS.map((t) => html`<a class="item" href="#/tools"><span class="slot">${icon("external")}</span><span class="txt">${t}</span></a>`)}
            </nav>
            <main class="main">
              <div class="filters">
                <div class="fetch"><label for="limit">Fetch Limit</label><select id="limit"><option>10</option><option>25</option><option>50</option></select>${icon("caret")}</div>
                <div class="find">${icon("filter")}<input type="text" aria-label="Filter Results" placeholder="Filter Results" /></div>
              </div>
              <div class="grid">
                <group-table .group=${G.category}></group-table>
                <sankey-chart .flow=${F1}></sankey-chart>
                <group-table .group=${G.module}></group-table>
                <sankey-chart .flow=${F2}></sankey-chart>
                <group-table .group=${G.dataset}></group-table>
                <group-table .group=${G.observer}></group-table>
                <group-table .group=${G.host}></group-table>
                <group-table .group=${G.source}></group-table>
              </div>
            </main>
          </div>
          <footer class="bottom"><span>Version: 2.4.160</span><span>© 2025 <a href="#/about">Security Onion Solutions, LLC</a></span><a href="#/license">License:ELv2</a></footer>
        </div>
        <div class="scroll"><div class="thumb"></div></div>
      </div>`;
  }
}
